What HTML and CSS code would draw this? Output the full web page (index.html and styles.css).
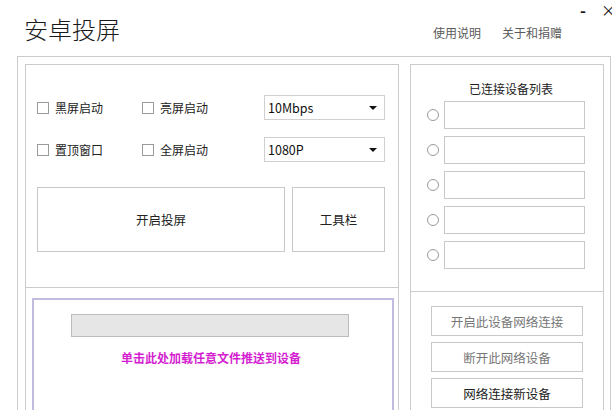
FILE: index.html
```html
<!DOCTYPE html>
<html lang="zh-CN">
<head>
    <meta charset="UTF-8">
    <meta name="viewport" content="width=device-width, initial-scale=1.0">
    <title>安卓投屏</title>
    <link rel="stylesheet" href="styles.css">
</head>
<body>

<div class="window">
    <div class="header">
        <span class="title">安卓投屏</span>
        <div class="links">
            <a href="#">使用说明</a>
            <a href="#">关于和捐赠</a>
        </div>
        <div class="controls">
            <span class="min">-</span>
            <span class="close">×</span>
        </div>
    </div>

    <div class="main">
        <div class="column left">
            <div class="section settings">
                <div class="options">
                    <label class="check"><span class="box"></span>黑屏启动</label>
                    <label class="check"><span class="box"></span>亮屏启动</label>
                    <div class="select"><span>10Mbps</span><i class="arrow"></i></div>

                    <label class="check"><span class="box"></span>置顶窗口</label>
                    <label class="check"><span class="box"></span>全屏启动</label>
                    <div class="select"><span>1080P</span><i class="arrow"></i></div>
                </div>
                <div class="actions">
                    <button class="btn big">开启投屏</button>
                    <button class="btn tool">工具栏</button>
                </div>
            </div>
            <div class="section push">
                <div class="drop">
                    <div class="progress"></div>
                    <p class="hint">单击此处加载任意文件推送到设备</p>
                </div>
            </div>
        </div>

        <div class="column right">
            <div class="section devices">
                <div class="devices-title">已连接设备列表</div>
                <ul class="device-list">
                    <li><span class="radio"></span><span class="field"></span></li>
                    <li><span class="radio"></span><span class="field"></span></li>
                    <li><span class="radio"></span><span class="field"></span></li>
                    <li><span class="radio"></span><span class="field"></span></li>
                    <li><span class="radio"></span><span class="field"></span></li>
                </ul>
            </div>
            <div class="section network">
                <button class="btn net disabled">开启此设备网络连接</button>
                <button class="btn net disabled">断开此网络设备</button>
                <button class="btn net">网络连接新设备</button>
            </div>
        </div>
    </div>
</div>

</body>
</html>
```

FILE: styles.css
```css
* {
    margin: 0;
    padding: 0;
    box-sizing: border-box;
}

body {
    width: 612px;
    height: 410px;
    overflow: hidden;
    background-color: #ffffff;
    font-family: "Noto Sans CJK SC", "Noto Sans", sans-serif;
    font-size: 12px;
    color: #222222;
}

a {
    text-decoration: none;
}

ul {
    list-style: none;
}

.window {
    position: relative;
    width: 612px;
    height: 410px;
}

/* ============ header ============ */

.header {
    height: 56px;
    padding: 2px 0 0 24px;
    display: flex;
    align-items: center;
}

.title {
    font-size: 24px;
    font-weight: 300;
    line-height: 1;
    color: #1a1a1a;
}

.links {
    margin-left: auto;
    margin-right: 50px;
    margin-top: 7px;
    display: flex;
    gap: 21px;
}

.links a {
    color: #5a5a5a;
    font-size: 12px;
}

.controls {
    position: absolute;
    top: 0;
    right: -4px;
    display: flex;
    align-items: center;
    gap: 15px;
    font-size: 15px;
    line-height: 20px;
    color: #111111;
}

.controls .min {
    font-weight: bold;
    font-size: 16px;
}

/* ============ main frame ============ */

.main {
    margin-left: 17px;
    width: 594px;
    height: 380px;
    border: solid 1px #cccccc;
    padding: 7px 6px 0 7px;
    display: flex;
    gap: 11px;
}

.column {
    border: solid 1px #cccccc;
    display: flex;
    flex-direction: column;
}

.column.left {
    width: 374px;
}

.column.right {
    width: 194px;
}

/* ============ settings ============ */

.settings {
    height: 223px;
    border-bottom: solid 1px #cccccc;
    padding: 30px 0 0 11px;
}

.options {
    display: grid;
    grid-template-columns: 105px 122px 121px;
    grid-auto-rows: 25px;
    row-gap: 17px;
    align-items: center;
}

.check {
    display: flex;
    align-items: center;
    gap: 6px;
    line-height: 1;
}

.box {
    width: 12px;
    height: 12px;
    border: solid 1px #9a9a9a;
    background-color: #ffffff;
}

.select {
    height: 25px;
    border: solid 1px #d0d0d0;
    background-color: #ffffff;
    padding: 0 7px 0 3px;
    display: flex;
    align-items: center;
    justify-content: space-between;
    font-size: 12.5px;
    color: #111111;
}

.arrow {
    width: 0;
    height: 0;
    border-left: 4px solid transparent;
    border-right: 4px solid transparent;
    border-top: 4px solid #111111;
}

.actions {
    margin-top: 25px;
    display: flex;
    gap: 7px;
}

.btn {
    background-color: #ffffff;
    border: solid 1px #c8c8c8;
    font-family: inherit;
    font-size: 12.5px;
    color: #222222;
}

.btn.big {
    width: 248px;
    height: 65px;
}

.btn.tool {
    width: 93px;
    height: 65px;
}

/* ============ push files ============ */

.push {
    flex: 1;
    padding: 10px 4px 0 6px;
}

.drop {
    height: 120px;
    border: solid 2px #c0bce0;
    display: flex;
    flex-direction: column;
    align-items: center;
    padding-top: 14px;
}

.progress {
    width: 278px;
    height: 23px;
    border: solid 1px #bcbcbc;
    background-color: #e6e6e6;
    margin-left: -6px;
}

.hint {
    margin-top: 12px;
    margin-left: -4px;
    font-weight: bold;
    color: #d41fd0;
}

/* ============ devices ============ */

.devices {
    height: 227px;
    border-bottom: solid 1px #cccccc;
    padding: 15px 0 0 16px;
}

.devices-title {
    text-align: center;
    padding-right: 8px;
    line-height: 17px;
}

.device-list {
    margin-top: 4px;
    display: flex;
    flex-direction: column;
    gap: 7px;
}

.device-list li {
    display: flex;
    align-items: center;
    gap: 5px;
}

.radio {
    width: 12px;
    height: 12px;
    border: solid 1px #9a9a9a;
    border-radius: 50%;
    background-color: #ffffff;
}

.field {
    width: 141px;
    height: 28px;
    border: solid 1px #c8c8c8;
    background-color: #ffffff;
}

/* ============ network ============ */

.network {
    flex: 1;
    padding: 14px 0 0 20px;
    display: flex;
    flex-direction: column;
    gap: 6px;
}

.btn.net {
    width: 152px;
    height: 30px;
}

.btn.disabled {
    color: #777777;
}
```
